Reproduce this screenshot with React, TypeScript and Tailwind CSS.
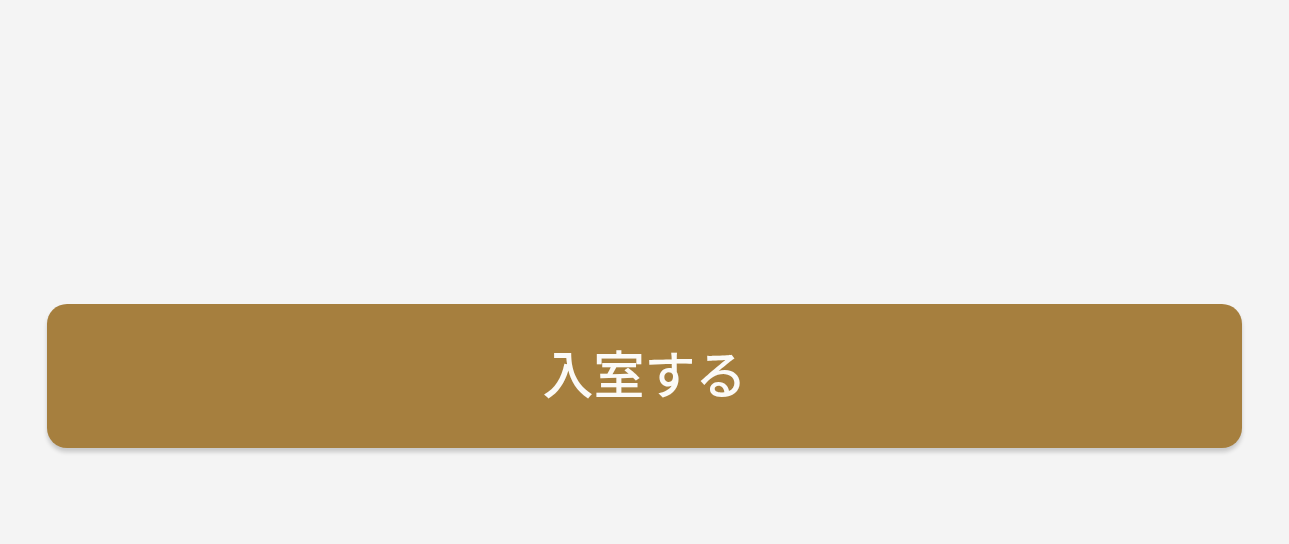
export default function App() {
  return (
    <div className="min-h-[544px] w-full bg-[#f4f4f4] px-[47px] pt-[304px] pb-[96px]">
      <button
        type="button"
        className="flex h-[144px] w-full items-center justify-center rounded-[20px] bg-[#a67f3e] shadow-[0_4px_4px_rgba(0,0,0,0.18)]"
      >
        <span
          className="mb-[8px] text-[51px] font-medium leading-none text-[#fbfaf7]"
          style={{ fontFamily: '"Noto Sans CJK JP", "Noto Sans", sans-serif' }}
        >
          入室する
        </span>
      </button>
    </div>
  )
}
